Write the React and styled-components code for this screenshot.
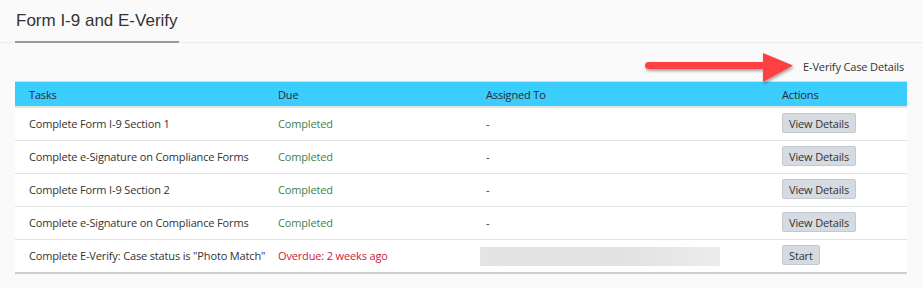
import React from 'react'
import styled, { createGlobalStyle } from 'styled-components'

const GlobalStyle = createGlobalStyle`
  html, body {
    margin: 0;
    padding: 0;
    background: #fafafa;
    font-family: "Open Sans", "Liberation Sans", Arial, sans-serif;
    color: #333;
  }
`;

const Page = styled.div`
  width: 923px;
  height: 288px;
  background: #fafafa;
  position: relative;
  overflow: hidden;
`;

const Header = styled.div`
  height: 42px;
  border-bottom: 1px solid #ececec;
  padding-left: 15px;
  display: flex;
  align-items: flex-end;
`;

const Title = styled.h1`
  margin: 0;
  font-family: "Liberation Sans", Arial, sans-serif;
  font-weight: normal;
  font-size: 17px;
  color: #333;
  padding: 0 1px 10px 1px;
  border-bottom: 2px solid #999;
  margin-bottom: -1px;
`;

const LinkRow = styled.div`
  display: flex;
  justify-content: flex-end;
  padding: 17px 19px 0 0;
  height: 21px;
`;

const CaseLink = styled.a`
  font-size: 11px;
  letter-spacing: -0.15px;
  color: #333;
  text-decoration: none;
  line-height: 14px;
`;

const Arrow = styled.svg`
  position: absolute;
  left: 640px;
  top: 50px;
`;

const Table = styled.table`
  margin-left: 15px;
  width: 892px;
  border-collapse: collapse;
  table-layout: fixed;
  background: #fff;
  border-top: 1px solid #dcdcdc;
  border-bottom: 2px solid #cfcfcf;
`;

const Th = styled.th`
  background: #3ccdff;
  text-align: left;
  font-weight: normal;
  font-size: 11px;
  letter-spacing: -0.15px;
  color: #2a2a2a;
  height: 24px;
  padding: 0 0 0 14px;
  border-bottom: 2px solid #e4e4e4;
`;

const Td = styled.td`
  font-size: 11px;
  letter-spacing: -0.15px;
  height: 30px;
  padding: 0 0 2px ${p => (p.$inset ? 8 : 14)}px;
  color: ${p => p.$tone === 'ok' ? '#3f7f4c' : p.$tone === 'late' ? '#cc1838' : '#333'};
  border-bottom: 1px solid #e2e2e2;
  white-space: nowrap;
`;

const Row = styled.tr`
  &:last-child td { border-bottom: none; }
`;

const Button = styled.button`
  font-family: inherit;
  font-size: 11px;
  letter-spacing: -0.15px;
  color: #333;
  background: #d5dbe1;
  border: 1px solid #c2c9d0;
  border-radius: 2px;
  height: 20px;
  padding: 0 6px;
  cursor: pointer;
`;

const Placeholder = styled.div`
  width: 240px;
  height: 19px;
  margin-top: 2px;
  background: linear-gradient(90deg, #e4e4e4 0%, #e2e2e2 60%, #ececec 100%);
`;

const tasks = [
  { name: 'Complete Form I-9 Section 1', due: 'Completed', tone: 'ok', who: '-', action: 'View Details' },
  { name: 'Complete e-Signature on Compliance Forms', due: 'Completed', tone: 'ok', who: '-', action: 'View Details' },
  { name: 'Complete Form I-9 Section 2', due: 'Completed', tone: 'ok', who: '-', action: 'View Details' },
  { name: 'Complete e-Signature on Compliance Forms', due: 'Completed', tone: 'ok', who: '-', action: 'View Details' },
  { name: 'Complete E-Verify: Case status is "Photo Match"', due: 'Overdue: 2 weeks ago', tone: 'late', who: null, action: 'Start' },
];

export default function App() {
  return (
    <Page>
      <GlobalStyle />
      <Header>
        <Title>Form I-9 and E-Verify</Title>
      </Header>
      <LinkRow>
        <CaseLink href="#">E-Verify Case Details</CaseLink>
      </LinkRow>
      <Arrow width="160" height="40" viewBox="0 0 160 40">
        <defs>
          <filter id="sh" x="-10%" y="-30%" width="120%" height="160%">
            <feDropShadow dx="1" dy="2" stdDeviation="1.5" floodColor="#000" floodOpacity="0.35" />
          </filter>
        </defs>
        <g filter="url(#sh)" fill="#ff4043">
          <rect x="5" y="12" width="122" height="7" rx="3.5" />
          <polygon points="123,3 153,15.5 123,32" />
        </g>
      </Arrow>
      <Table>
        <colgroup>
          <col style={{ width: 249 }} />
          <col style={{ width: 208 }} />
          <col style={{ width: 296 }} />
          <col style={{ width: 139 }} />
        </colgroup>
        <thead>
          <tr>
            <Th>Tasks</Th>
            <Th>Due</Th>
            <Th>Assigned To</Th>
            <Th>Actions</Th>
          </tr>
        </thead>
        <tbody>
          {tasks.map((t, i) => (
            <Row key={i}>
              <Td>{t.name}</Td>
              <Td $tone={t.tone}>{t.due}</Td>
              {t.who ? <Td>{t.who}</Td> : <Td $inset><Placeholder /></Td>}
              <Td><Button>{t.action}</Button></Td>
            </Row>
          ))}
        </tbody>
      </Table>
    </Page>
  )
}
